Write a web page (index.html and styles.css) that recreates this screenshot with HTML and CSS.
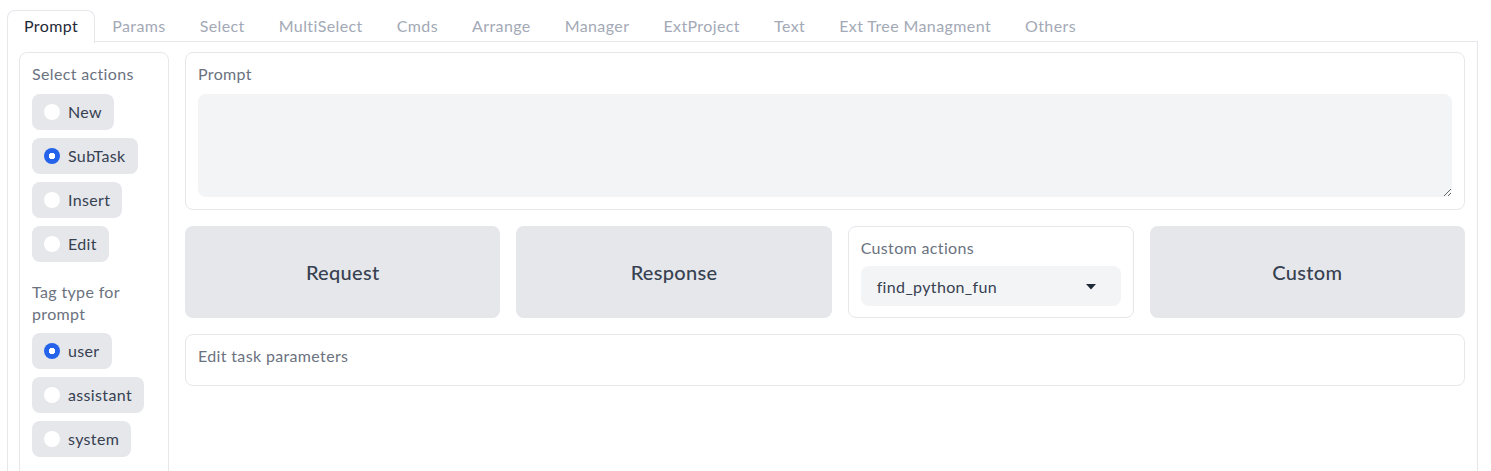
FILE: index.html
```html
<!DOCTYPE html>
<html lang="en">
<head>
<meta charset="utf-8">
<title>Prompt</title>
<link rel="stylesheet" href="styles.css">
</head>
<body>
<div class="tabs">
  <div class="tabnav">
    <button class="tab active">Prompt</button>
    <button class="tab">Params</button>
    <button class="tab">Select</button>
    <button class="tab">MultiSelect</button>
    <button class="tab">Cmds</button>
    <button class="tab">Arrange</button>
    <button class="tab">Manager</button>
    <button class="tab">ExtProject</button>
    <button class="tab">Text</button>
    <button class="tab">Ext Tree Managment</button>
    <button class="tab">Others</button>
  </div>
  <div class="panel">
    <div class="row">
      <div class="side block">
        <div class="label">Select actions</div>
        <div class="radios">
          <label class="radio"><span class="dot"></span>New</label>
          <label class="radio"><span class="dot checked"></span>SubTask</label>
          <label class="radio"><span class="dot"></span>Insert</label>
          <label class="radio"><span class="dot"></span>Edit</label>
        </div>
        <div class="label second">Tag type for prompt</div>
        <div class="radios">
          <label class="radio"><span class="dot checked"></span>user</label>
          <label class="radio"><span class="dot"></span>assistant</label>
          <label class="radio"><span class="dot"></span>system</label>
        </div>
      </div>
      <div class="main">
        <div class="block prompt">
          <div class="label">Prompt</div>
          <textarea class="textarea"></textarea>
        </div>
        <div class="buttons">
          <button class="btn">Request</button>
          <button class="btn">Response</button>
          <div class="block custom">
            <div class="label">Custom actions</div>
            <div class="select">
              <span>find_python_fun</span>
              <svg class="caret" width="10" height="6" viewBox="0 0 10 6"><path d="M0 0H10L5 5.5Z" fill="#1f2937"/></svg>
            </div>
          </div>
          <button class="btn">Custom</button>
        </div>
        <div class="block accordion">
          <div class="label">Edit task parameters</div>
        </div>
      </div>
    </div>
  </div>
</div>
</body>
</html>
```

FILE: styles.css
```css
* { box-sizing: border-box; }
html, body {
  margin: 0;
  background: #ffffff;
  font-family: Lato, "Open Sans", sans-serif;
  color: #374151;
  overflow: hidden;
}
.tabs {
  padding: 10px 13px 0 7px;
}
.tabnav {
  display: flex;
  border-bottom: 1px solid #e5e7eb;
  height: 32px;
}
.tab {
  font: inherit;
  font-size: 16px;
  letter-spacing: 0.4px;
  color: #a3a9b6;
  background: none;
  border: 1px solid transparent;
  border-bottom: none;
  padding: 0 16px 3px;
  height: 32px;
  cursor: pointer;
}
.tab.active {
  color: #1f2937;
  background: #fff;
  border-color: #e5e7eb;
  border-radius: 8px 8px 0 0;
  height: 33px;
  padding-bottom: 4px;
}
.panel {
  border: 1px solid #e5e7eb;
  border-top: none;
  padding: 10px 12px 0 11px;
  height: 440px;
}
.row {
  display: flex;
  gap: 16px;
  align-items: flex-start;
}
.block {
  border: 1px solid #e5e7eb;
  border-radius: 8px;
  background: #fff;
  padding: 11px 12px 12px;
}
.label {
  font-size: 16px;
  letter-spacing: 0.35px;
  line-height: 20px;
  color: #6b7280;
}
.side {
  width: 150px;
  flex: none;
  height: 430px;
}
.side .label.second {
  margin-top: 19px;
  line-height: 22px;
}
.radios {
  display: flex;
  flex-direction: column;
  align-items: flex-start;
  gap: 8px;
  margin-top: 10px;
}
.side .label.second + .radios { margin-top: 8px; }
.radio {
  display: flex;
  align-items: center;
  gap: 8px;
  height: 36px;
  padding: 0 12px 1px;
  background: #e5e7eb;
  border-radius: 8px;
  font-size: 16px;
  letter-spacing: 0.35px;
  color: #374151;
}
.dot {
  width: 16px;
  height: 16px;
  border-radius: 50%;
  background: #fff;
  flex: none;
  margin-top: 1px;
}
.dot.checked {
  background: radial-gradient(circle, #fff 0 3px, #2563eb 3.5px);
}
.main {
  flex: 1;
  display: flex;
  flex-direction: column;
  gap: 16px;
}
.textarea {
  display: block;
  width: 100%;
  height: 103px;
  margin-top: 10px;
  border: none;
  border-radius: 8px;
  background: #f3f4f6;
  resize: vertical;
  font: inherit;
  outline: none;
}
.buttons {
  display: flex;
  gap: 16px;
  height: 92px;
}
.btn {
  flex: 1 1 0;
  border: none;
  border-radius: 8px;
  background: #e5e7eb;
  font-family: inherit;
  font-size: 20px;
  letter-spacing: 0.3px;
  font-weight: 500;
  color: #374151;
}
.custom {
  flex: 0 0 286px;
}
.select {
  margin-top: 8px;
  height: 40px;
  background: #f3f4f6;
  border-radius: 8px;
  display: flex;
  align-items: center;
  justify-content: space-between;
  padding: 0 25px 0 16px;
  font-size: 16px;
  letter-spacing: 0.35px;
  color: #374151;
}
.caret { display: block; margin-top: 1px; }
.accordion {
  height: 52px;
  padding-top: 11px;
}
```
